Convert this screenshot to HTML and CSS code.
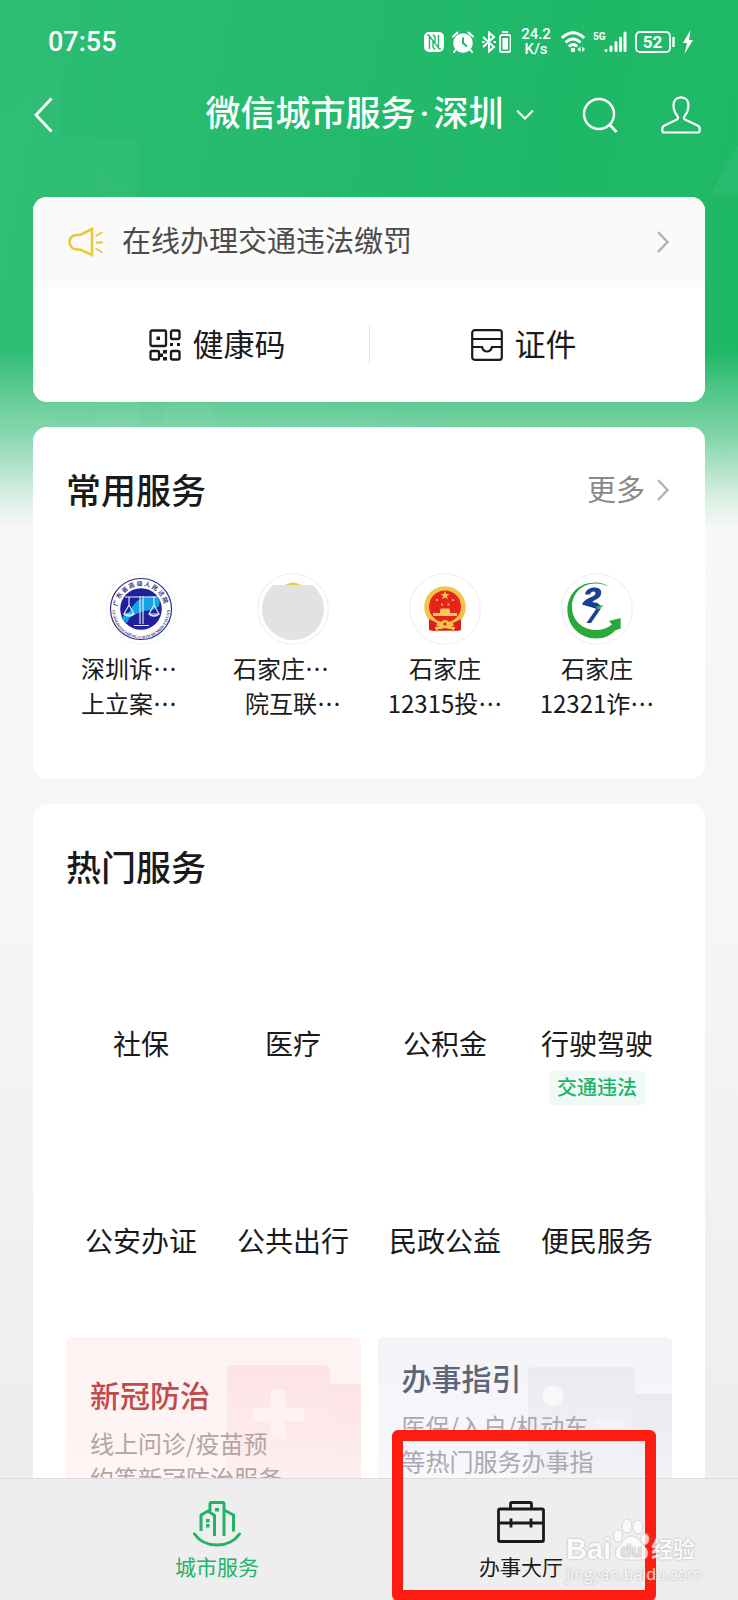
FILE: index.html
```html
<!DOCTYPE html>
<html lang="zh-CN">
<head>
<meta charset="utf-8">
<meta name="viewport" content="width=device-width, initial-scale=1">
<title>微信城市服务·深圳</title>
<link rel="stylesheet" href="styles.css">
</head>
<body>
<div class="app">
  <svg class="backdrop" viewBox="0 0 738 530" preserveAspectRatio="none" aria-hidden="true">
    <g fill="#fff">
      <path d="M0 117L60 72V530H0z" opacity=".025"/>
      <path d="M60 140h78v390H60z" opacity=".025"/>
      <path d="M97 170l42 26v334H97z" opacity=".025"/>
      <path d="M165 400h48v30h-48z" opacity=".03"/>
      <path d="M738 145v50h-28z" opacity=".05"/>
    </g>
  </svg>

  <div class="status">
    <time class="status-time">07:55</time>
    <div class="status-icons">
      <svg width="20" height="22" viewBox="0 0 20 22" aria-label="NFC"><rect y="1" width="20" height="20" rx="5" fill="#fff"/><path d="M5.500 18V5l9 12V4M5.500 5L3 3.500M14.500 17l2.500 1.500M9 3.500l2 2.500v7M11 18.500L9 16V9" fill="none" stroke="#1fb868" stroke-width="1.400"/></svg>
      <svg width="22" height="22" viewBox="0 0 22 22" aria-label="闹钟"><circle cx="11" cy="12" r="9.800" fill="#fff"/><path d="M1 5.500L5.500 1.500M21 5.500L16.500 1.500M4 18.500L2 21M18 18.500l2 2.500" stroke="#fff" stroke-width="2" stroke-linecap="round"/><path d="M11 6.500V12l4 3.500" fill="none" stroke="#1fb868" stroke-width="2"/></svg>
      <svg width="29" height="22" viewBox="0 0 29 22" aria-label="蓝牙"><path d="M1 6l11 10-5 4.500V1.500L12 6 1 16" fill="none" stroke="#fff" stroke-width="2"/><path d="M0 11h2.500M11.500 11h2.500" stroke="#fff" stroke-width="2.200"/><path d="M20 1h6" stroke="#fff" stroke-width="2"/><rect x="18" y="4" width="10.500" height="17" rx="2" fill="none" stroke="#fff" stroke-width="1.800"/><path d="M20.500 7h5.500v11.500h-5.500z" fill="#fff"/></svg>
      <span class="status-speed">24.2<br>K/s</span>
      <svg width="24" height="22" viewBox="0 0 24 22" aria-label="无线网络"><g fill="none" stroke="#fff" stroke-width="2.800"><path d="M.8 7Q12-3.500 23.200 7"/><path d="M4.500 11.500q7.500-7 15 0"/><path d="M7.800 15.500q4.200-4 8.400 0"/></g><circle cx="12" cy="19" r="2.300" fill="#fff"/><path d="M19.500 15.500v5.500l-3-2.700zM21 15.500v5.500l3-2.700z" fill="#fff"/></svg>
      <svg width="34" height="22" viewBox="0 0 34 22" aria-label="信号"><text x="0" y="9" class="svg-5g">5G</text><path d="M13 19.500v.1M18 16v3.500M23 11.500v8M27.500 7v12.500M32 2v17.500" stroke="#fff" stroke-width="3" stroke-linecap="round"/></svg>
      <svg width="40" height="22" viewBox="0 0 40 22" aria-label="电量"><rect x="1" y="1" width="34" height="20" rx="4" fill="none" stroke="#fff" stroke-width="1.800"/><path d="M38.500 6v10" stroke="#fff" stroke-width="2.400"/><text x="17.500" y="17" class="svg-power">52</text></svg>
      <svg width="10" height="24" viewBox="0 0 10 24" aria-label="充电中"><path d="M7.500 0L0 13h4L1.500 24 10 10H6z" fill="#fff"/></svg>
    </div>
  </div>

  <header class="nav">
    <button class="icon-button nav-back" type="button" aria-label="返回"><svg width="20" height="36" viewBox="0 0 20 36"><path d="M18.500 1.500L3 18l15.500 16.500" fill="none" stroke="#fff" stroke-width="2.800"/></svg></button>
    <button class="nav-title" type="button"><span class="nav-name">微信城市服务<span class="nav-dot">·</span>深圳</span><svg width="18" height="12" viewBox="0 0 18 12" aria-hidden="true"><path d="M1 1.500l8 8 8-8" fill="none" stroke="#fff" stroke-width="2"/></svg></button>
    <div class="nav-actions">
      <button class="icon-button" type="button" aria-label="搜索"><svg width="36" height="38" viewBox="0 0 36 38"><circle cx="17" cy="18" r="15" fill="none" stroke="#fff" stroke-width="2.400"/><path d="M27 28l7.500 8" stroke="#fff" stroke-width="2.800"/></svg></button>
      <button class="icon-button" type="button" aria-label="我的"><svg width="40" height="38" viewBox="0 0 40 38"><path d="M20 1.300c-5 0-7.500 3.500-7.500 8 0 4.500 1.500 8 4 11 .9 1.100.7 2.600-.5 3.200L3.500 29.500C2 30.200 1.300 31.500 1.300 33v1.500c0 1.200.7 2 2 2h33.400c1.300 0 2-.8 2-2V33c0-1.500-.7-2.800-2.200-3.500L24 23.500c-1.200-.6-1.400-2.100-.5-3.200 2.500-3 4-6.500 4-11 0-4.500-2.500-8-7.500-8z" fill="none" stroke="#fff" stroke-width="2.200"/></svg></button>
    </div>
  </header>

  <main class="content">
    <section class="card">
      <a class="notice" href="#notice">
        <svg width="36" height="30" viewBox="0 0 36 30" aria-hidden="true"><g fill="none" stroke="#eec63a" stroke-width="2.600"><path d="M24 2v26L12 22.500H8.500C4.500 22.500 1.500 19 1.500 15s3-7 7-7H12z"/><path d="M27.500 9l7-4M28 15.500h7M27.500 21.500l7 4" stroke-width="2"/></g></svg>
        <span class="notice-text">在线办理交通违法缴罚</span>
        <svg width="12" height="22" viewBox="0 0 12 22" aria-hidden="true"><path d="M1 1l9.500 10L1 21" fill="none" stroke="#b2b2b2" stroke-width="2.400"/></svg>
      </a>
      <div class="quick">
        <a class="quick-item" href="#health-code">
          <svg width="32" height="32" viewBox="0 0 32 32" aria-hidden="true"><g fill="none" stroke="#1a1a1a" stroke-width="2.300"><rect x="1.500" y="1.500" width="15.500" height="15.500" rx="1.500"/><rect x="22" y="1.500" width="8.500" height="8.500" rx="1.500"/><rect x="1.500" y="22" width="8.500" height="8.500" rx="1.500"/><rect x="22" y="22" width="8.500" height="8.500" rx="1.500"/></g><path d="M7.500 7.500h3.500v3.500H7.500zM21 14h3v3h-3zM28 14h3v3h-3zM14 21h4v3.500h-4zM10.500 24.500H14v3.500h-3.500zM14 28h4v3.500h-4z" fill="#1a1a1a"/></svg>
          <span>健康码</span>
        </a>
        <a class="quick-item" href="#documents">
          <svg width="32" height="32" viewBox="0 0 32 32" aria-hidden="true"><g fill="none" stroke="#1a1a1a" stroke-width="2.200"><rect x="1.200" y="1.200" width="29.600" height="29.600" rx="2.500"/><path d="M1 10h30M1 18h10c.8 3 2.500 4.500 5 4.500s4.200-1.500 5-4.500h10"/></g></svg>
          <span>证件</span>
        </a>
      </div>
    </section>

    <section class="card card-padded">
      <div class="card-head">
        <h2>常用服务</h2>
        <a class="more" href="#more"><span>更多</span><svg width="12" height="22" viewBox="0 0 12 22" aria-hidden="true"><path d="M1 1l9.500 10L1 21" fill="none" stroke="#b2b2b2" stroke-width="2.400"/></svg></a>
      </div>
      <div class="services">
        <a class="service" href="#court">
          <svg class="logo" viewBox="0 0 72 72" aria-hidden="true">
            <circle cx="36" cy="36" r="35" fill="#fff" stroke="#f4f4f4"/>
            <circle cx="36" cy="36" r="30.500" fill="#fff" stroke="#2a2f7c" stroke-width="1.200"/>
            <circle cx="36" cy="36" r="20.800" fill="#20209a"/>
            <path d="M27 34l5-6 8-4 10-1 5 4-1 6-6 4-9 1-8 3-6 3-3 6-5-4 2-4 5-3z" fill="#15a3e8"/>
            <g fill="none" stroke="#e8f0ff" stroke-width="1.100"><path d="M20 24h33M35 23v28M38 23v28M29 52.500h15M24 24v8l-5 9h10l-5-9M49 24v8l-5 9h10l-5-9"/><path d="M19 41q5 4 10 0M44 41q5 4 10 0" stroke-width="1.600"/></g>
            <path id="court-top" d="M12.500 33.500A23.700 23.700 0 0 1 59.500 33.500" fill="none"/>
            <path id="court-bottom" d="M7.500 37A28.500 28.500 0 0 0 64.500 37" fill="none"/>
            <text class="seal-cn"><textPath href="#court-top">广 东 省 高 级 人 民 法 院</textPath></text>
            <text class="seal-en"><textPath href="#court-bottom">GUANGDONGSHENG GAOJI RENMIN FAYUAN</textPath></text>
          </svg>
          <span class="service-line is-short">深圳诉…</span>
          <span class="service-line is-short">上立案…</span>
        </a>
        <a class="service" href="#internet-court">
          <svg class="logo" viewBox="0 0 72 72" aria-hidden="true"><circle cx="36" cy="36" r="35.300" fill="#fff" stroke="#ececec"/><path d="M28 12q8-5 16 0z" fill="#ebc94f"/><path d="M16.500 12h39A31 31 0 1 1 16.500 12z" fill="#e2e2e2"/></svg>
          <span class="service-line is-short">石家庄…</span>
          <span class="service-line">院互联…</span>
        </a>
        <a class="service" href="#12315">
          <svg class="logo" viewBox="0 0 72 72" aria-hidden="true">
            <circle cx="36" cy="36" r="35.300" fill="#fff" stroke="#ececec"/>
            <path d="M20 45h32v12l-5 .8H25L20 57z" fill="#d9201a"/>
            <circle cx="36" cy="34" r="20.800" fill="#f3c44a"/>
            <circle cx="36" cy="33.500" r="16" fill="#e7231b"/>
            <path d="M36 18l1.200 3h3.300l-2.600 2 1 3.200-2.900-1.900-2.900 1.900 1-3.200-2.600-2h3.300zM31 37l1-1.500h8l1 1.500v3h7v3H24v-3h7z" fill="#f8cb57"/>
            <path d="M27 26h2v2h-2zM43 26h2v2h-2zM32 30.500h2v2h-2zM38.500 30.500h2v2h-2z" fill="#f8b047"/>
            <path d="M21 46q15 9 30 0" fill="none" stroke="#f3c44a" stroke-width="2.500"/>
            <path d="M20 46l8 4-2 8-6-1zM52 46l-8 4 2 8 6-1z" fill="#d9201a"/>
            <circle cx="36" cy="51" r="4" fill="#f3c44a"/><circle cx="36" cy="51" r="1.600" fill="#d9201a"/>
            <path d="M26 55h6l4-1 4 1h6M28 59v-4M44 59v-4" fill="none" stroke="#f3c44a" stroke-width="1.800"/>
          </svg>
          <span class="service-line">石家庄</span>
          <span class="service-line">12315投…</span>
        </a>
        <a class="service" href="#12321">
          <svg class="logo" viewBox="0 0 72 72" aria-hidden="true">
            <circle cx="36" cy="36" r="35.300" fill="#fff" stroke="#ececec"/>
            <path d="M49 14.500C44 10.500 39 9.500 34 9.500C18 9.500 6.400 21 6.400 37C6.400 53 19 65.500 35 65.500C44 65.500 50 62 54 57.500L59.700 55.500V45L48 48L51 51.500C46 55.500 41 57 35.500 57C21 57 11 47 11 34C11 21 20 11 34 10.500C40 10.500 45 12 49 14.500z" fill="#29a93b"/>
            <path d="M24 21.500C25 16 30 14.500 34 14.500C39.500 14.500 41.500 18.500 39.500 22.500C38 25.500 34.500 26.500 31 29L36.500 30L40 33L36 36L21 31.500C23 26 29 25 33 22.500C35.500 21 34.500 18.500 32.500 18.500C30.500 18.500 29.500 20 29 21.500z" fill="#1b3f94"/>
            <path d="M35.500 35.500H40L30 50H25.500z" fill="#1b3f94"/>
            <path d="M34.500 33.500L42.500 32L37.500 37z" fill="#32a866"/>
          </svg>
          <span class="service-line">石家庄</span>
          <span class="service-line">12321诈…</span>
        </a>
      </div>
    </section>

    <section class="card card-padded">
      <div class="card-head"><h2>热门服务</h2></div>
      <div class="topics">
        <a class="topic" href="#t1"><span class="topic-name">社保</span></a>
        <a class="topic" href="#t2"><span class="topic-name">医疗</span></a>
        <a class="topic" href="#t3"><span class="topic-name">公积金</span></a>
        <a class="topic" href="#t4"><span class="topic-name">行驶驾驶</span><span class="tag">交通违法</span></a>
        <a class="topic" href="#t5"><span class="topic-name">公安办证</span></a>
        <a class="topic" href="#t6"><span class="topic-name">公共出行</span></a>
        <a class="topic" href="#t7"><span class="topic-name">民政公益</span></a>
        <a class="topic" href="#t8"><span class="topic-name">便民服务</span></a>
      </div>
      <div class="banners">
        <a class="banner banner-red" href="#covid">
          <svg class="banner-art" width="136" height="180" viewBox="0 0 136 180" aria-hidden="true"><defs><linearGradient id="red-fade" x1="0" y1="0" x2="0" y2="1"><stop offset="0" stop-color="#fde3e5"/><stop offset="1" stop-color="#fef3f3"/></linearGradient></defs><path d="M104 47h32v133h-32z" fill="url(#red-fade)"/><rect x="2" y="28" width="103" height="150" rx="5" fill="url(#red-fade)"/><path d="M46 53h14v18h19v13H60v18H46V84H28V71h18z" fill="#fff2f1"/></svg>
          <span class="banner-title">新冠防治</span>
          <span class="banner-text">线上问诊/疫苗预<br>约等新冠防治服务</span>
        </a>
        <a class="banner banner-blue" href="#guide">
          <svg class="banner-art" width="144" height="180" viewBox="0 0 144 180" aria-hidden="true"><defs><linearGradient id="blue-fade" x1="0" y1="0" x2="0" y2="1"><stop offset="0" stop-color="#ebebef"/><stop offset="1" stop-color="#f6f6fa"/></linearGradient></defs><path d="M106 57h38v123h-38z" fill="url(#blue-fade)"/><rect y="30" width="107" height="150" rx="5" fill="url(#blue-fade)"/><circle cx="25" cy="59" r="10.500" fill="#f8f8fb"/><path d="M66 83h28v8H66z" fill="#f4f4f8"/></svg>
          <span class="banner-title">办事指引</span>
          <span class="banner-text">医保/入户/机动车<br>等热门服务办事指</span>
        </a>
      </div>
    </section>
  </main>

  <nav class="tabs">
    <a class="tab is-active" href="#city">
      <svg width="48" height="46" viewBox="0 0 48 46" aria-hidden="true"><g fill="none" stroke="#22b26a" stroke-width="3" stroke-linecap="round" stroke-linejoin="round"><path d="M1.500 33Q9 44 24 44t22.500-11"/><path d="M8 30V14l7-4 6.500 4.500V35M17 10V3q0-1.500 1.500-1.500h11Q31 1.500 31 3v32M31 9l9.500 5v16.500" stroke-linecap="butt"/></g><path d="M22 7h4v3.500h-4zM13 18h3.500v3.500H13zM13 23h3.500v3.500H13z" fill="#22b26a"/></svg>
      <span>城市服务</span>
    </a>
    <a class="tab" href="#hall">
      <svg width="48" height="46" viewBox="0 0 48 46" aria-hidden="true"><g fill="none" stroke="#1a1a1a" stroke-width="2.800"><rect x="1.500" y="8" width="45" height="32.500" rx="1.500"/><path d="M13.500 8V3q0-1.500 1.500-1.500h18q1.500 0 1.500 1.500v5M1.500 22h45M14 17.500v9M34 17.500v9"/></g></svg>
      <span>办事大厅</span>
    </a>
  </nav>

  <div class="highlight"></div>
  <div class="watermark">
    <div class="watermark-brand"><span class="watermark-bai">Bai</span><svg width="38" height="44" viewBox="0 0 38 44" aria-hidden="true"><g fill="#fff" stroke="#d0d0d0"><ellipse cx="6" cy="18" rx="4.500" ry="6"/><ellipse cx="15" cy="8" rx="4.800" ry="7"/><ellipse cx="26" cy="9" rx="4.800" ry="7"/><ellipse cx="33" cy="21" rx="4" ry="5.500"/><path d="M19 18C13 18 11 24 6 29C1 34 3 42 10 42H29C36 42 38 34 33 29C28 24 25 18 19 18z"/></g><text x="19.500" y="39" class="paw-text">du</text></svg><span class="watermark-cn">经验</span></div>
    <div class="watermark-url">jingyan.baidu.com</div>
  </div>
</div>
</body>
</html>
```

FILE: styles.css
```css
* {
  box-sizing: border-box;
}

body {
  margin: 0;
  font-family: "Noto Sans CJK SC", "Noto Sans", sans-serif;
  color: #1a1a1a;
}

a {
  color: inherit;
  text-decoration: none;
}

button {
  padding: 0;
  border: 0;
  background: none;
  color: inherit;
  font: inherit;
}

svg {
  display: block;
  flex: none;
}

.app {
  position: relative;
  display: flex;
  flex-direction: column;
  height: 100vh;
  overflow: hidden;
  background:
    linear-gradient(180deg, rgba(247, 247, 247, 0) 350px, rgba(247, 247, 247, .3) 405px, rgba(247, 247, 247, .42) 430px, rgba(247, 247, 247, .88) 500px, #f7f7f7 528px, #f6f6f6 900px, #eeeeee 1400px),
    linear-gradient(100deg, #2dbd74 0, #1fb868 55%, #1db966 100%);
}

.backdrop {
  position: absolute;
  top: 0;
  left: 0;
  width: 100%;
  height: 530px;
}

/* Status bar */

.status {
  position: relative;
  display: flex;
  align-items: center;
  justify-content: space-between;
  height: 84px;
  padding: 0 45px 0 48px;
  color: #fff;
}

.status-time {
  font: 500 27px/32px Roboto, sans-serif;
}

.status-icons {
  display: flex;
  align-items: center;
  gap: 8px;
}

.status-speed {
  width: 34px;
  font: 500 15px/15px Roboto, sans-serif;
  text-align: center;
}

.svg-5g {
  font: 700 10px Roboto, sans-serif;
  fill: #fff;
}

.svg-power {
  font: 700 17px Roboto, sans-serif;
  fill: #fff;
  text-anchor: middle;
}

/* Navigation bar */

.nav {
  position: relative;
  display: grid;
  grid-template-columns: 1fr auto 1fr;
  align-items: center;
  height: 62px;
  padding: 0 37px 0 33px;
  color: #fff;
}

.nav-back {
  justify-self: start;
}

.nav-title {
  display: flex;
  align-items: center;
  gap: 12px;
  padding-left: 5px;
  font-size: 35px;
  font-weight: 500;
  line-height: 50px;
}

.nav-name {
  padding-bottom: 4px;
}

.nav-dot {
  display: inline-block;
  width: 18px;
  font-family: Roboto, sans-serif;
  text-align: center;
}

.nav-actions {
  display: flex;
  justify-content: flex-end;
  gap: 43px;
}

/* Cards */

.content {
  position: relative;
  flex: 1;
  display: flex;
  flex-direction: column;
  gap: 25px;
  min-height: 0;
  padding: 51px 33px 0;
  overflow-y: auto;
  scrollbar-width: none;
}

.card {
  flex: none;
  border-radius: 14px;
  background: #fff;
  overflow: hidden;
}

.card-padded {
  padding: 38px 32px 59px;
}

.notice {
  display: flex;
  align-items: center;
  height: 90px;
  padding: 0 36px 0 35px;
  background: #fafafb;
  color: #4c4c4c;
  font-size: 29px;
}

.notice-text {
  flex: 1;
  padding: 0 0 6px 18px;
}

.quick {
  display: grid;
  grid-template-columns: 1fr 1fr;
  align-items: center;
  height: 115px;
}

.quick-item {
  display: flex;
  align-items: center;
  justify-content: center;
  gap: 12px;
  height: 38px;
  padding-left: 32px;
  font-size: 31px;
}

.quick-item span {
  padding-bottom: 5px;
}

.quick-item + .quick-item {
  padding: 0 28px 0 0;
  border-left: 1px solid #e6e6e6;
}

.card-head {
  display: flex;
  align-items: center;
  justify-content: space-between;
  height: 50px;
  padding: 0 4px 0 1px;
}

h2 {
  margin: 0;
  padding-bottom: 3px;
  font-size: 35px;
  font-weight: 500;
  line-height: 50px;
}

.more {
  display: flex;
  align-items: center;
  gap: 12px;
  color: #8a8a8a;
  font-size: 29px;
  line-height: 46px;
}

.more span {
  padding-bottom: 4px;
}

.services,
.topics {
  display: grid;
  grid-template-columns: repeat(4, 1fr);
  margin-top: 58px;
}

.service,
.topic {
  display: flex;
  flex-direction: column;
  align-items: center;
}

.logo {
  width: 72px;
  height: 72px;
  margin-bottom: 5px;
}

.seal-cn {
  font: 700 6px "Noto Sans CJK SC", sans-serif;
  fill: #33387f;
}

.seal-en {
  font: 700 4px "Liberation Serif", serif;
  fill: #33387f;
}

.service-line {
  font-size: 24px;
  line-height: 35px;
  white-space: nowrap;
}

.service-line.is-short {
  padding-right: 24px;
}

.topics {
  row-gap: 42px;
}

.topic {
  padding-top: 73px;
}

.topic-name {
  font-size: 28px;
  line-height: 40px;
}

.tag {
  margin-top: 8px;
  padding: 0 8px 2px;
  border-radius: 5px;
  background: #effaf5;
  color: #1db26b;
  font-size: 20px;
  font-weight: 500;
  line-height: 32px;
}

/* Banners */

.banners {
  display: grid;
  grid-template-columns: 1fr 1fr;
  gap: 17px;
  margin: 77px 0 0;
  padding: 0 1px;
}

.banner {
  position: relative;
  display: flex;
  flex-direction: column;
  height: 180px;
  padding: 0 24px;
  border-radius: 6px;
  overflow: hidden;
}

.banner-red {
  padding-top: 34px;
  background: linear-gradient(180deg, #fef2f2, #fff6f6);
}

.banner-blue {
  padding-top: 17px;
  background: linear-gradient(180deg, #f4f4f8, #f8f8fd);
}

.banner-art {
  position: absolute;
  top: 0;
  right: 0;
}

.banner-title {
  position: relative;
  font-size: 30px;
  font-weight: 500;
  line-height: 46px;
}

.banner-red .banner-title {
  color: #c14a4a;
}

.banner-blue .banner-title {
  color: #5d6579;
}

.banner-text {
  position: relative;
  margin-top: 8px;
  font-size: 24px;
  line-height: 35px;
  white-space: nowrap;
}

.banner-red .banner-text {
  color: #b5a4a4;
}

.banner-blue .banner-text {
  color: #a9a9b0;
}

/* Bottom tabs */

.tabs {
  position: relative;
  display: grid;
  grid-template-columns: 1fr 1fr;
  flex: none;
  height: 122px;
  padding: 0 65px;
  border-top: 1px solid #dcdcdc;
  background: #eeeeee;
}

.tab {
  display: flex;
  flex-direction: column;
  align-items: center;
  gap: 4px;
  padding-top: 22px;
  font-size: 21px;
  line-height: 30px;
}

.tab.is-active {
  color: #22b26a;
}

/* Overlays */

.highlight {
  position: absolute;
  right: 82px;
  bottom: -1px;
  width: 264px;
  height: 171px;
  border: 11px solid #ff1c10;
  border-radius: 6px;
  pointer-events: none;
}

.watermark {
  position: absolute;
  right: 38px;
  bottom: 14px;
  width: 134px;
  color: #fff;
  opacity: .75;
  text-shadow: 0 0 2px #888888;
  pointer-events: none;
}

.watermark-brand {
  display: flex;
  align-items: flex-end;
  gap: 1px;
}

.watermark-bai {
  font: 700 29px/26px "Liberation Sans", sans-serif;
}

.watermark-cn {
  font: 700 22px/30px "Noto Sans CJK SC", sans-serif;
}

.watermark-url {
  font: 400 16px/24px "Open Sans", sans-serif;
}

.paw-text {
  font: 700 18px "Liberation Sans", sans-serif;
  fill: #dddddd;
  text-anchor: middle;
}
```
